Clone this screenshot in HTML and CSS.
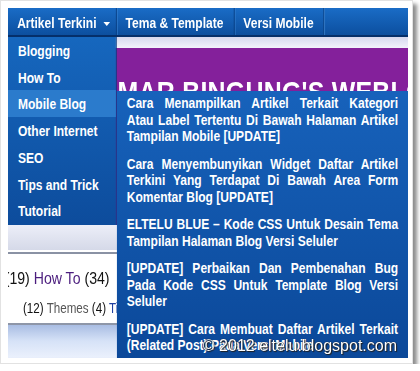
FILE: index.html
```html
<!DOCTYPE html>
<html lang="id">
<head>
    <meta charset="UTF-8">
    <meta name="viewport" content="width=device-width, initial-scale=1.0">
    <title>Artikel Terkini</title>
    <link rel="stylesheet" href="styles.css">
</head>
<body>
<div class="frame">
    <div class="shot">
        <!-- the screenshot is squeezed sideways, so the page is laid out wider and scaled -->
        <div class="canvas">
            <div class="menubar">
                <div class="menu-item first">Artikel Terkini<span class="caret"></span></div>
                <div class="menu-item">Tema &amp; Template</div>
                <div class="menu-item">Versi Mobile</div>
            </div>
            <div class="strip"></div>
            <div class="banner"><span>MAR BINGUNG'S WEBLOG</span></div>
            <div class="subbar"></div>
            <div class="tags">
                <div class="tags-big">(19) <span class="purple">How To</span> (34)</div>
                <div class="tags-small">(12) <span class="gray">Themes</span> (4) <span class="blue">Tips</span></div>
            </div>
            <div class="foot"></div>

            <ul class="dropdown">
                <li>Blogging</li>
                <li>How To</li>
                <li class="hover">Mobile Blog</li>
                <li>Other Internet</li>
                <li>SEO</li>
                <li>Tips and Trick</li>
                <li>Tutorial</li>
            </ul>

            <div class="posts">
                <div class="post">
                    <span>Cara Menampilkan Artikel Terkait Kategori</span>
                    <span>Atau Label Tertentu Di Bawah Halaman Artikel</span>
                    <span class="last">Tampilan Mobile [UPDATE]</span>
                </div>
                <div class="post">
                    <span>Cara Menyembunyikan Widget Daftar Artikel</span>
                    <span>Terkini Yang Terdapat Di Bawah Area Form</span>
                    <span class="last">Komentar Blog [UPDATE]</span>
                </div>
                <div class="post">
                    <span>ELTELU BLUE &ndash; Kode CSS Untuk Desain Tema</span>
                    <span class="last">Tampilan Halaman Blog Versi Seluler</span>
                </div>
                <div class="post">
                    <span>[UPDATE] Perbaikan Dan Pembenahan Bug</span>
                    <span>Pada Kode CSS Untuk Template Blog Versi</span>
                    <span class="last">Seluler</span>
                </div>
                <div class="post">
                    <span>[UPDATE] Cara Membuat Daftar Artikel Terkait</span>
                    <span class="last">(Related Post) Pada Versi Mobile</span>
                </div>
            </div>
        </div>

        <div class="watermark">&copy; 2012 eltelu.blogspot.com</div>
    </div>
</div>
</body>
</html>
```

FILE: styles.css
```css
body{
    margin: 0;
    background: #fff;
    font-family: "Liberation Sans", Arial, sans-serif;
}
.frame{
    width: 400px;
    height: 350px;
    padding: 7px 4px 5px 7px;
    border: 1px solid #e2e2e2;
    background: #fff;
    box-shadow: 4px 4px 4px rgba(0,0,0,0.45);
}
.shot{
    position: relative;
    width: 400px;
    height: 350px;
    overflow: hidden;
    background: #fff;
}
.canvas{
    position: relative;
    width: 482px;
    height: 350px;
    transform: scaleX(0.83);
    transform-origin: 0 0;
}

/* top menu */
.menubar{
    display: flex;
    height: 27px;
    background: linear-gradient(#1a6cc6, #0c4f9f);
    border-bottom: 2px solid #052f6a;
}
.menu-item{
    padding: 3px 12px 0 11px;
    line-height: 24px;
    color: #fff;
    font-weight: bold;
    font-size: 14.5px;
    white-space: nowrap;
    border-right: 1px solid #0a3f82;
    box-shadow: 1px 0 0 #3a84d2;
}
.menu-item.first{
    padding-right: 7px;
}
.caret{
    display: inline-block;
    vertical-align: middle;
    margin-left: 8px;
    border-left: 4px solid transparent;
    border-right: 4px solid transparent;
    border-top: 4px solid #fff;
}

/* page under the menu */
.strip{
    height: 11px;
    background: linear-gradient(#d6d8ee, #f2f2fc);
}
.banner{
    height: 177px;
    background: #84209b;
    overflow: hidden;
    white-space: nowrap;
}
.banner span{
    display: block;
    padding: 29px 0 0 132px;
    line-height: 30px;
    font-size: 30px;
    font-weight: bold;
    letter-spacing: 0.3px;
    color: #fff;
}
.subbar{
    height: 25px;
    background: linear-gradient(#eceef8, #d5d9e8);
    border-bottom: 2px solid #fff;
}
.tags{
    height: 69px;
    border-top: 2px solid #8a92a4;
    white-space: nowrap;
    color: #111;
}
.tags-big{
    margin: 15px 0 0 -4px;
    font-size: 17px;
    line-height: 20px;
}
.tags-small{
    margin: 10px 0 0 18px;
    font-size: 14px;
    line-height: 18px;
}
.purple{
    color: #4b1d7e;
}
.gray{
    color: #555;
}
.blue{
    color: #2040a0;
}
.foot{
    height: 40px;
    border-top: 2px solid #8e96a8;
    background: linear-gradient(#a9bde3, #d6e2f7 40%, #eaf0fc 80%, #c8d6f0);
}

/* dropdown */
.dropdown{
    position: absolute;
    left: 0;
    top: 29px;
    width: 130px;
    margin: 0;
    padding: 0 0 1px 0;
    list-style: none;
    background: linear-gradient(#1667be, #0d4c9c);
    border-right: 1px solid #093b80;
}
.dropdown li{
    padding: 7px 0 4px 12px;
    line-height: 15.7px;
    font-size: 14.5px;
    font-weight: bold;
    color: #fff;
    white-space: nowrap;
}
.dropdown li.hover{
    background: #2b7bcc;
}

.posts{
    position: absolute;
    left: 131px;
    top: 83px;
    right: 0;
    bottom: 0;
    padding: 4px 12px 0 12px;
    background: linear-gradient(#1762bb, #0b4899);
    color: #fff;
    font-size: 14.5px;
    font-weight: bold;
    line-height: 16.5px;
}
.post{
    margin-bottom: 11px;
}
.post span{
    display: block;
    text-align: justify;
    text-align-last: justify;
    white-space: nowrap;
}
.post span.last{
    text-align-last: left;
}

.watermark{
    position: absolute;
    right: 11px;
    bottom: 3px;
    font-size: 16px;
    color: #fff;
    text-shadow: 0 0 1px #000, 1px 1px 1px #222;
}
```
